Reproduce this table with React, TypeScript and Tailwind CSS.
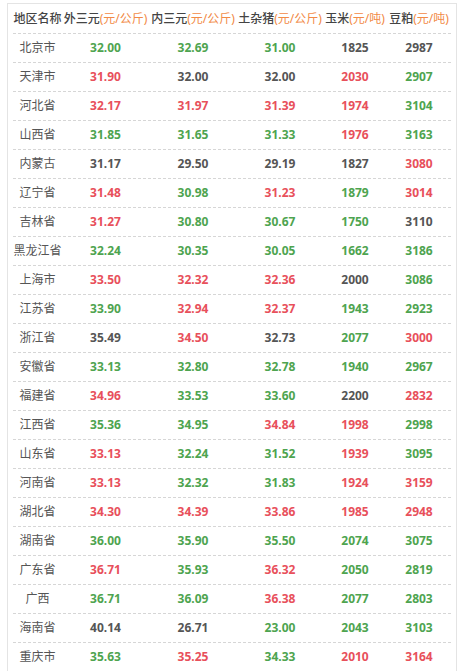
import React from "react";

type C = "g" | "r" | "n";
const rows: [string, [string, C][]][] = [
  ["北京市", [["32.00", "g"], ["32.69", "g"], ["31.00", "g"], ["1825", "n"], ["2987", "n"]]],
  ["天津市", [["31.90", "r"], ["32.00", "n"], ["32.00", "n"], ["2030", "r"], ["2907", "g"]]],
  ["河北省", [["32.17", "r"], ["31.97", "r"], ["31.39", "r"], ["1974", "r"], ["3104", "g"]]],
  ["山西省", [["31.85", "g"], ["31.65", "g"], ["31.33", "g"], ["1976", "r"], ["3163", "g"]]],
  ["内蒙古", [["31.17", "n"], ["29.50", "n"], ["29.19", "n"], ["1827", "n"], ["3080", "r"]]],
  ["辽宁省", [["31.48", "r"], ["30.98", "g"], ["31.23", "r"], ["1879", "g"], ["3014", "r"]]],
  ["吉林省", [["31.27", "r"], ["30.80", "g"], ["30.67", "g"], ["1750", "g"], ["3110", "n"]]],
  ["黑龙江省", [["32.24", "g"], ["30.35", "g"], ["30.05", "g"], ["1662", "g"], ["3186", "g"]]],
  ["上海市", [["33.50", "r"], ["32.32", "r"], ["32.36", "r"], ["2000", "n"], ["3086", "g"]]],
  ["江苏省", [["33.90", "g"], ["32.94", "r"], ["32.37", "r"], ["1943", "g"], ["2923", "g"]]],
  ["浙江省", [["35.49", "n"], ["34.50", "r"], ["32.73", "n"], ["2077", "g"], ["3000", "r"]]],
  ["安徽省", [["33.13", "g"], ["32.80", "g"], ["32.78", "g"], ["1940", "g"], ["2967", "g"]]],
  ["福建省", [["34.96", "r"], ["33.53", "g"], ["33.60", "g"], ["2200", "n"], ["2832", "r"]]],
  ["江西省", [["35.36", "g"], ["34.95", "g"], ["34.84", "r"], ["1998", "r"], ["2998", "g"]]],
  ["山东省", [["33.13", "r"], ["32.24", "g"], ["31.52", "g"], ["1939", "r"], ["3095", "g"]]],
  ["河南省", [["33.13", "r"], ["32.32", "g"], ["31.83", "g"], ["1924", "r"], ["3159", "r"]]],
  ["湖北省", [["34.30", "r"], ["34.39", "r"], ["33.86", "r"], ["1985", "r"], ["2948", "r"]]],
  ["湖南省", [["36.00", "g"], ["35.90", "g"], ["35.50", "g"], ["2074", "g"], ["3075", "g"]]],
  ["广东省", [["36.71", "r"], ["35.93", "g"], ["36.32", "r"], ["2050", "g"], ["2819", "g"]]],
  ["广西", [["36.71", "g"], ["36.09", "g"], ["36.38", "r"], ["2077", "g"], ["2803", "g"]]],
  ["海南省", [["40.14", "n"], ["26.71", "n"], ["23.00", "g"], ["2043", "g"], ["3103", "g"]]],
  ["重庆市", [["35.63", "g"], ["35.25", "r"], ["34.33", "g"], ["2010", "r"], ["3164", "r"]]],
];

const colorClass: Record<C, string> = {
  g: "text-[#4ea44f]",
  r: "text-[#e8505b]",
  n: "text-[#555555]",
};

const grid = "grid grid-cols-[49px_87px_88px_86px_64px_64px]";

const headers: [string, string][] = [
  ["外三元", "(元/公斤)"],
  ["内三元", "(元/公斤)"],
  ["土杂猪", "(元/公斤)"],
  ["玉米", "(元/吨)"],
  ["豆粕", "(元/吨)"],
];

export default function App() {
  return (
    <div className="w-[460px] h-[671px] overflow-hidden bg-white font-['Noto_Sans','Noto_Sans_CJK_SC',sans-serif]">
      <div className="ml-[7px] mt-[3px] w-[450px] border-l border-r border-t border-[#e4e4e4] px-[5px]">
        <div className={`${grid} h-[30px] items-center border-b border-dashed border-[#d6d6d6] text-[12px] text-[#444444] font-medium whitespace-nowrap`}>
          <div className="text-center">地区名称</div>
          {headers.map(([a, b]) => (
            <div key={a} className="text-center">
              {a}
              <span className="text-[#f28a46] font-normal">{b}</span>
            </div>
          ))}
        </div>
        {rows.map(([name, vals]) => (
          <div
            key={name}
            className={`${grid} h-[29px] items-center border-b border-dashed border-[#d6d6d6] text-[12px] whitespace-nowrap`}
          >
            <div className="text-center text-[#555555]">{name}</div>
            {vals.map(([v, c], i) => (
              <div key={i} className={`text-center font-bold ${colorClass[c]}`}>
                {v}
              </div>
            ))}
          </div>
        ))}
      </div>
    </div>
  );
}
